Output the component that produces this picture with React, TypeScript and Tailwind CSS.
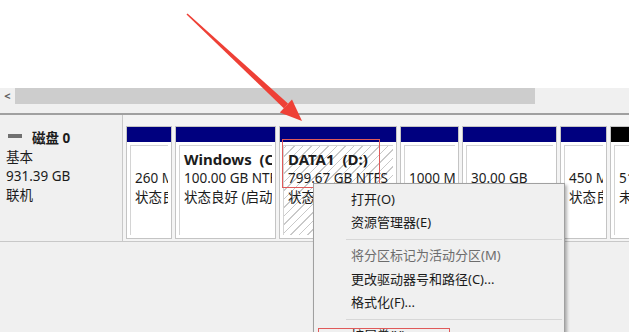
import React from "react";

const font = { fontFamily: '"Noto Sans", "Noto Sans CJK SC", sans-serif' };

type Part = { w: string; bar: string; lines: { t: string; bold?: boolean }[]; hatch?: boolean };

const parts: Part[] = [
  { w: "w-[46px]", bar: "bg-[#00007f]", lines: [{ t: "" }, { t: "260 MB" }, { t: "状态良好" }] },
  { w: "w-[101px]", bar: "bg-[#00007f]", lines: [{ t: "Windows  (C:)", bold: true }, { t: "100.00 GB NTFS" }, { t: "状态良好 (启动)" }] },
  { w: "w-[118px]", bar: "bg-[#00007f]", hatch: true, lines: [{ t: "DATA1  (D:)", bold: true }, { t: "799.67 GB NTFS" }, { t: "状态良好" }] },
  { w: "w-[59px]", bar: "bg-[#00007f]", lines: [{ t: "" }, { t: "1000 MB" }, { t: "" }] },
  { w: "w-[95px]", bar: "bg-[#00007f]", lines: [{ t: "" }, { t: "30.00 GB" }, { t: "" }] },
  { w: "w-[47px]", bar: "bg-[#00007f]", lines: [{ t: "" }, { t: "450 MB" }, { t: "状态良好" }] },
  { w: "w-[60px]", bar: "bg-[#000000]", lines: [{ t: "" }, { t: "512 MB" }, { t: "未分配" }] },
];

function Partition({ p }: { p: Part }) {
  return (
    <div className={`${p.w} shrink-0 flex flex-col border border-[#c4c4c4]`}>
      <div className={`h-[15px] ${p.bar}`} />
      <div className="flex-1 bg-white p-[3px]">
        <div
          className={`h-full border-l border-t border-[#d4d4d4] pl-[4px] pt-[4px] overflow-hidden whitespace-pre text-[13.5px] leading-[19px] text-[#1c1c1c] ${
            p.hatch
              ? "bg-[image:repeating-linear-gradient(-45deg,#c9c9c9_0px,#c9c9c9_1px,#ffffff_1px,#ffffff_6px)]"
              : ""
          }`}
        >
          {p.lines.map((l, i) => (
            <div key={i} className={`h-[19px] ${l.bold ? "font-bold text-[15px]" : ""}`}>
              {l.t}
            </div>
          ))}
        </div>
      </div>
    </div>
  );
}

function MenuItem({ label, disabled }: { label: string; disabled?: boolean }) {
  return (
    <div className={`h-[23px] flex items-center pl-[37px] text-[13px] ${disabled ? "text-[#6d6d6d]" : "text-[#1a1a1a]"}`}>
      {label}
    </div>
  );
}

function Sep() {
  return (
    <div className="h-[10px] flex items-center pl-[32px] pr-[2px]">
      <div className="h-px w-full bg-[#d7d7d7]" />
    </div>
  );
}

export default function App() {
  return (
    <div className="relative w-[629px] h-[332px] overflow-hidden bg-white" style={font}>
      <div className="h-[88px] bg-white" />
      {/* horizontal scrollbar */}
      <div className="h-[16px] flex bg-[#f0f0f0]">
        <div className="w-[15px] flex items-center justify-center text-[11px] font-bold text-[#606060]">&lt;</div>
        <div className="w-[520px] bg-[#cdcdcd]" />
      </div>
      <div className="h-[9px] bg-[#f0f0f0]" />
      <div className="h-[2px] bg-[#a0a0a0]" />
      <div className="bg-[#f0f0f0] h-[217px]">
        <div className="flex h-[127px] border-b border-[#c8c8c8]">
          <div className="w-[123px] shrink-0 border-r border-[#c8c8c8] bg-[#f0f0f0] pl-[6px] pt-[14px] text-[13.5px] leading-[19px] text-[#1c1c1c]">
            <div className="flex items-center h-[19px]">
              <div className="w-[14px] h-[4px] bg-[#707070] ml-[2px] mr-[10px] -mt-[6px]" />
              <span className="font-bold">磁盘 0</span>
            </div>
            <div>基本</div>
            <div>931.39 GB</div>
            <div>联机</div>
          </div>
          <div className="flex gap-[3px] pl-[3px] pt-[11px] pb-[2px] bg-[#f4f4f4]">
            {parts.map((p, i) => (
              <Partition key={i} p={p} />
            ))}
          </div>
        </div>
      </div>

      {/* red highlight boxes */}
      <div className="absolute left-[282px] top-[139px] w-[98px] h-[49px] border border-[#e05a5a]" />
      <div className="absolute left-[318px] top-[328px] w-[132px] h-[20px] border border-[#e05a5a] z-20" />

      {/* context menu */}
      <div className="absolute left-[313px] top-[183px] w-[252px] h-[170px] bg-[#f0f0f0] border border-[#a0a0a0] shadow-[2px_2px_3px_rgba(0,0,0,0.3)] pt-[4px] z-10">
        <MenuItem label="打开(O)" />
        <MenuItem label="资源管理器(E)" />
        <Sep />
        <MenuItem label="将分区标记为活动分区(M)" disabled />
        <div className="h-[1px]" />
        <MenuItem label="更改驱动器号和路径(C)..." />
        <MenuItem label="格式化(F)..." />
        <Sep />
        <MenuItem label="扩展卷(X)..." />
      </div>

      {/* annotation arrow */}
      <svg className="absolute left-0 top-0 z-30" width="629" height="332" viewBox="0 0 629 332">
        <polygon points="186.5,14.5 187.5,13.5 288,103.5 284,108.5" fill="#ee4036" />
        <polygon points="302,121 279.8,112.6 292,99.4" fill="#ee4036" />
      </svg>
    </div>
  );
}
